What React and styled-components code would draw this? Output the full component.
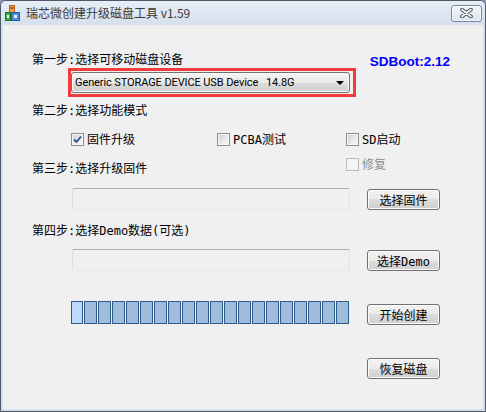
import React from "react";
import styled, { createGlobalStyle } from "styled-components";

const GlobalStyle = createGlobalStyle`
  html, body {
    margin: 0;
    padding: 0;
    background: #8a97aa;
  }
  body {
    width: 486px;
    height: 412px;
    overflow: hidden;
  }
`;

const simsun = `"DejaVu Sans Mono", "Noto Sans CJK SC", monospace`;

const Window = styled.div`
  width: 486px;
  height: 412px;
  box-sizing: border-box;
  border: 1px solid #4f5866;
  border-radius: 6px 6px 0 0;
  background: #d3deec;
  display: flex;
  flex-direction: column;
  overflow: hidden;
`;

const TitleBar = styled.div`
  height: 24px;
  flex: none;
  display: flex;
  align-items: center;
  padding: 0 3px 0 4px;
  background: linear-gradient(#e6edf6, #d5e0ee);
`;

const AppIcon = styled.svg`
  width: 15px;
  height: 16px;
  flex: none;
`;

const Title = styled.div`
  flex: 1;
  margin-left: 6px;
  font: 12px "Noto Sans CJK SC", sans-serif;
  color: #3a3a3a;
  line-height: 16px;
`;

const CloseBtn = styled.div`
  width: 31px;
  height: 17px;
  box-sizing: border-box;
  border: 1px solid #7a869a;
  border-radius: 3px;
  background: linear-gradient(#f3f6fa, #dde5ef);
  box-shadow: inset 0 0 0 1px rgba(255, 255, 255, 0.7);
  display: flex;
  align-items: center;
  justify-content: center;
`;

const Client = styled.div`
  flex: 1;
  margin: 0 2px 2px;
  background: #f0f0f0;
  padding-left: 29px;
  display: flex;
  flex-direction: column;
  font: 12px ${simsun};
  color: #000;
`;

const Row = styled.div`
  display: flex;
  align-items: flex-start;
  margin-top: ${(p) => p.$top || 0}px;
  margin-left: ${(p) => p.$indent || 0}px;
  height: ${(p) => (p.$h ? p.$h + "px" : "auto")};
`;

const StepLabel = styled.div`
  line-height: 14px;
  height: 14px;
  white-space: nowrap;
  width: ${(p) => (p.$w ? p.$w + "px" : "auto")};
  margin-top: ${(p) => p.$top || 0}px;
`;

const SDBoot = styled.div`
  margin-left: auto;
  margin-right: 33px;
  margin-top: 2px;
  font: bold 13.5px "Liberation Sans", Arial, sans-serif;
  line-height: 14px;
  color: #0000ff;
`;

const RedFrame = styled.div`
  width: 288px;
  height: 29px;
  box-sizing: border-box;
  border: 3px solid #f23c3c;
  padding: 1px 3px 1px 0;
`;

const Combo = styled.div`
  height: 21px;
  box-sizing: border-box;
  border: 1px solid #707070;
  border-radius: 3px;
  background: linear-gradient(#f2f2f2 0%, #ebebeb 50%, #dddddd 50%, #cfcfcf 100%);
  box-shadow: inset 0 0 0 1px #fbfbfb;
  display: flex;
  align-items: center;
  padding: 0 4px 0 3px;
  font: 11px Roboto, "Liberation Sans", sans-serif;
  letter-spacing: -0.1px;
  color: #000;
`;

const ComboText = styled.span`
  flex: 1;
  white-space: pre;
`;

const Arrow = styled.span`
  width: 0;
  height: 0;
  border-left: 4px solid transparent;
  border-right: 4px solid transparent;
  border-top: 4px solid #000;
  margin-right: 1px;
`;

const CheckCell = styled.div`
  width: ${(p) => (p.$w ? p.$w + "px" : "auto")};
  display: flex;
  align-items: center;
  height: 13px;
  color: ${(p) => (p.$disabled ? "#8d8d8d" : "#000")};
`;

const Box = styled.span`
  width: 13px;
  height: 13px;
  box-sizing: border-box;
  flex: none;
  border: 1px solid ${(p) => (p.$disabled ? "#bcbcbc" : "#8e8f8f")};
  background: ${(p) =>
    p.$disabled
      ? "#f4f4f4"
      : "linear-gradient(135deg, #c9ccd2 0%, #e8e9eb 55%, #fafafa 100%)"};
  box-shadow: inset 0 0 0 1px ${(p) => (p.$disabled ? "#f4f4f4" : "#f6f6f6")};
  display: flex;
  align-items: center;
  justify-content: center;
`;

const CheckText = styled.span`
  margin-left: 3px;
  line-height: 14px;
  white-space: nowrap;
`;

const Field = styled.div`
  width: 278px;
  height: 22px;
  box-sizing: border-box;
  border: 1px solid;
  border-color: #abadb3 #e2e3ea #e3e9ef #dbdfe6;
  border-radius: 2px;
  background: #f0f0f0;
`;

const Button = styled.div`
  width: 73px;
  height: 21px;
  box-sizing: border-box;
  border: 1px solid #707070;
  border-radius: 3px;
  background: linear-gradient(#f2f2f2 0%, #ebebeb 50%, #dddddd 50%, #cfcfcf 100%);
  box-shadow: inset 0 0 0 1px #fcfcfc;
  display: flex;
  align-items: center;
  justify-content: center;
  margin-left: ${(p) => p.$gap || 0}px;
  margin-top: ${(p) => p.$top || 0}px;
  font: 12px ${simsun};
  white-space: nowrap;
`;

const Progress = styled.div`
  display: flex;
  gap: 1px;
  height: 23px;
`;

const Segment = styled.div`
  width: ${(p) => (p.$first ? 12 : 13)}px;
  height: 23px;
  box-sizing: border-box;
  border: 1px solid #2f5a8c;
  background: ${(p) => (p.$first ? "#bddbff" : "#9fbcdb")};
`;

const Check = () => (
  <svg width="9" height="9" viewBox="0 0 9 9">
    <path d="M1 4.5 L3.5 7 L8 1.5" fill="none" stroke="#2f4f94" strokeWidth="1.8" />
  </svg>
);

const CheckBox = ({ label, checked, disabled, w }) => (
  <CheckCell $w={w} $disabled={disabled}>
    <Box $disabled={disabled}>{checked && <Check />}</Box>
    <CheckText>{label}</CheckText>
  </CheckCell>
);

const segments = Array.from({ length: 20 }, (_, i) => i);

export default function App() {
  return (
    <>
      <GlobalStyle />
      <Window>
        <TitleBar>
          <AppIcon viewBox="0 0 15 16">
            <rect x="4.5" y="0.5" width="5" height="7" fill="#f2a33a" stroke="#b5641a" />
            <rect x="5.5" y="2" width="3" height="2" fill="#d2402a" />
            <rect x="0.5" y="7.5" width="5" height="8" fill="#3daa4a" stroke="#1f6e2a" />
            <rect x="6.5" y="7.5" width="8" height="8" fill="#4b8fdc" stroke="#215a9e" />
            <rect x="2" y="10" width="2" height="3" fill="#e8f6e8" />
            <rect x="9" y="10" width="3" height="3" fill="#e6f0fb" />
          </AppIcon>
          <Title>瑞芯微创建升级磁盘工具 v1.59</Title>
          <CloseBtn>
            <svg width="13" height="10" viewBox="0 0 13 10">
              <path d="M2 1.5 L11 8.5 M11 1.5 L2 8.5" stroke="#4a4f58" strokeWidth="3.6" strokeLinecap="round" />
              <path d="M2 1.5 L11 8.5 M11 1.5 L2 8.5" stroke="#ffffff" strokeWidth="1.6" strokeLinecap="round" />
            </svg>
          </CloseBtn>
        </TitleBar>
        <Client>
          <Row $top={28} $h={14}>
            <StepLabel>第一步:选择可移动磁盘设备</StepLabel>
            <SDBoot>SDBoot:2.12</SDBoot>
          </Row>
          <Row $top={1} $indent={36}>
            <RedFrame>
              <Combo>
                <ComboText>Generic STORAGE DEVICE USB Device   14.8G</ComboText>
                <Arrow />
              </Combo>
            </RedFrame>
          </Row>
          <Row $top={7}>
            <StepLabel>第二步:选择功能模式</StepLabel>
          </Row>
          <Row $top={15} $indent={39} $h={13}>
            <CheckBox w={146} label="固件升级" checked />
            <CheckBox w={129} label="PCBA测试" />
            <CheckBox label="SD启动" />
          </Row>
          <Row $top={12} $h={16}>
            <StepLabel $w={314} $top={4}>第三步:选择升级固件</StepLabel>
            <CheckBox label="修复" disabled />
          </Row>
          <Row $top={14} $indent={40} $h={22}>
            <Field />
            <Button $gap={17} $top={1}>选择固件</Button>
          </Row>
          <Row $top={14}>
            <StepLabel>第四步:选择Demo数据(可选)</StepLabel>
          </Row>
          <Row $top={11} $indent={40} $h={22}>
            <Field />
            <Button $gap={17} $top={1}>选择Demo</Button>
          </Row>
          <Row $top={30} $indent={39} $h={23}>
            <Progress>
              {segments.map((i) => (
                <Segment key={i} $first={i === 0} />
              ))}
            </Progress>
            <Button $gap={18} $top={3}>开始创建</Button>
          </Row>
          <Row $top={34} $indent={335}>
            <Button>恢复磁盘</Button>
          </Row>
        </Client>
      </Window>
    </>
  );
}
